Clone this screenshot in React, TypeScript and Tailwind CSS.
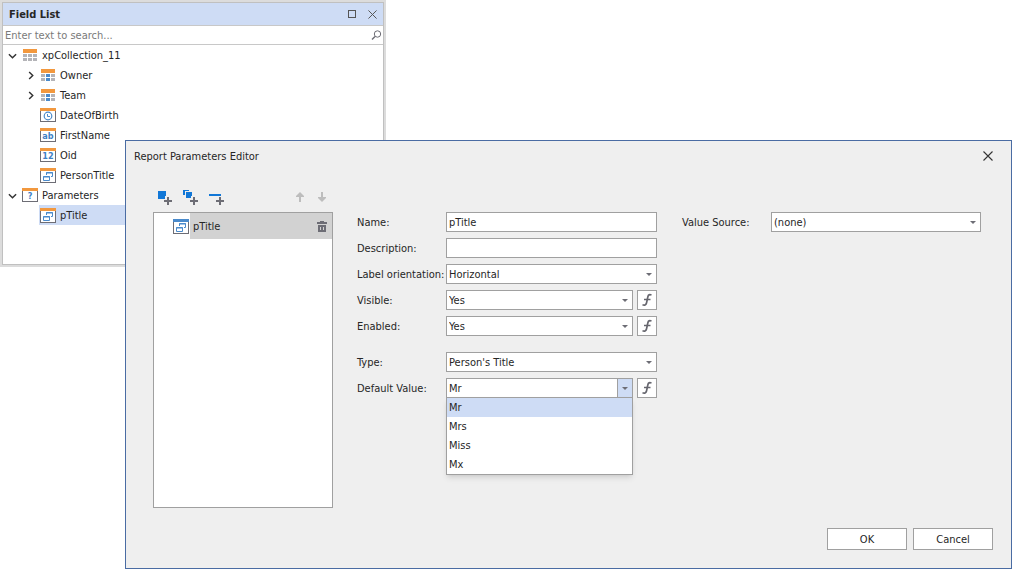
import { useId, type ReactNode } from 'react'

type IconKind = 'collection' | 'relation' | 'date' | 'text' | 'number' | 'question' | 'lookup'

interface TreeNode {
  label: string
  icon: IconKind
  level: 0 | 1
  state?: 'open' | 'closed'
  selected?: boolean
}

const nodes: TreeNode[] = [
  { label: 'xpCollection_11', icon: 'collection', level: 0, state: 'open' },
  { label: 'Owner', icon: 'relation', level: 1, state: 'closed' },
  { label: 'Team', icon: 'relation', level: 1, state: 'closed' },
  { label: 'DateOfBirth', icon: 'date', level: 1 },
  { label: 'FirstName', icon: 'text', level: 1 },
  { label: 'Oid', icon: 'number', level: 1 },
  { label: 'PersonTitle', icon: 'lookup', level: 1 },
  { label: 'Parameters', icon: 'question', level: 0, state: 'open' },
  { label: 'pTitle', icon: 'lookup', level: 1, selected: true },
]

const titles = ['Mr', 'Mrs', 'Miss', 'Mx']

function TableIcon({ linked }: { linked?: boolean }) {
  const mid = linked ? '#4a8acb' : '#b4b4b8'
  return (
    <svg width="16" height="16" viewBox="0 0 16 16" shapeRendering="crispEdges" aria-hidden="true">
      <rect x="1" y="2" width="14" height="4" fill="#f2983e" />
      {[7, 11].map((y) => (
        <g key={y}>
          <rect x="1" y={y} width="4" height="3" fill="#b4b4b8" />
          <rect x="6" y={y} width="4" height="3" fill={mid} />
          <rect x="11" y={y} width="4" height="3" fill="#b4b4b8" />
        </g>
      ))}
    </svg>
  )
}

function FrameIcon({ children }: { children: ReactNode }) {
  return (
    <svg width="16" height="16" viewBox="0 0 16 16" aria-hidden="true">
      <rect x="0.5" y="2.5" width="15" height="12" fill="#fff" stroke="#6d6d75" />
      <rect x="0" y="1" width="16" height="3" fill="#f2983e" />
      {children}
    </svg>
  )
}

function LookupIcon({ bar = '#f2983e' }: { bar?: string }) {
  return (
    <svg width="16" height="16" viewBox="0 0 16 16" aria-hidden="true">
      <rect x="0.5" y="2.5" width="15" height="13" fill="#fff" stroke="#6d6d75" />
      <rect x="0" y="1" width="16" height="3" fill={bar} />
      <g fill="none" stroke="#4a8acb">
        <path d="M6.5 8V5.5h6v4H11" />
        <path d="M6 6h7" />
        <path d="M3.5 9.5h6v4h-6z" />
        <path d="M3 10h7" />
      </g>
    </svg>
  )
}

function GlyphText({ children }: { children: string }) {
  return (
    <text x="8" y="12" textAnchor="middle" fill="#3f80c4" fontSize="9" fontWeight="700" fontFamily="DejaVu Sans Condensed, DejaVu Sans, sans-serif">
      {children}
    </text>
  )
}

function NodeIcon({ kind }: { kind: IconKind }) {
  switch (kind) {
    case 'collection':
      return <TableIcon />
    case 'relation':
      return <TableIcon linked />
    case 'date':
      return (
        <FrameIcon>
          <circle cx="8" cy="9" r="3.8" fill="none" stroke="#4a8acb" strokeWidth="1.2" />
          <path d="M7.5 7v2.500H10" fill="none" stroke="#4a8acb" />
        </FrameIcon>
      )
    case 'text':
      return <FrameIcon><GlyphText>ab</GlyphText></FrameIcon>
    case 'number':
      return <FrameIcon><GlyphText>12</GlyphText></FrameIcon>
    case 'question':
      return <FrameIcon><GlyphText>?</GlyphText></FrameIcon>
    case 'lookup':
      return <LookupIcon />
  }
}

function CloseIcon({ size }: { size: number }) {
  return (
    <svg width={size} height={size} viewBox="0 0 10 10" stroke="currentColor" strokeWidth="1.1" aria-hidden="true">
      <path d="M0.5 0.5l9 9M9.5 0.5l-9 9" />
    </svg>
  )
}

function Chevron({ state }: { state: 'open' | 'closed' }) {
  return (
    <svg width="9" height="9" viewBox="0 0 10 10" fill="none" stroke="#333" strokeWidth="1.6" aria-hidden="true">
      <path d={state === 'open' ? 'M1 3.5L5 7.5l4-4' : 'M3.5 1L7.5 5l-4 4'} />
    </svg>
  )
}

function TreeRow({ node }: { node: TreeNode }) {
  return (
    <li className={node.level === 1 ? 'flex h-5 pl-[19px]' : 'flex h-5 pl-px'}>
      <span className="flex w-[17px] shrink-0 items-center justify-center">
        {node.state && (
          <button type="button" aria-label={`Toggle ${node.label}`}>
            <Chevron state={node.state} />
          </button>
        )}
      </span>
      <span className={`flex flex-1 items-center gap-1 pl-px ${node.selected ? 'bg-[#cedcf5]' : ''}`}>
        <NodeIcon kind={node.icon} />
        {node.label}
      </span>
    </li>
  )
}

function FieldList() {
  return (
    <section className="w-[386px] border-2 border-[#dcdcdc] bg-white">
      <div className="border border-[#c0c0c0]">
        <header className="flex h-[23px] items-center border-b border-[#c8c8c8] bg-[#cedcf5] pr-1.5 pl-1.5">
          <h2 className="flex-1 font-bold">Field List</h2>
          <div className="flex items-center gap-3 text-[#555]">
            <button type="button" aria-label="Maximize" className="size-2 border border-[#555]" />
            <button type="button" aria-label="Close field list">
              <CloseIcon size={9} />
            </button>
          </div>
        </header>
        <div className="flex h-[19px] items-center border-b border-[#c8c8c8] pr-px pl-0.5">
          <input
            type="text"
            aria-label="Search fields"
            placeholder="Enter text to search..."
            className="min-w-0 flex-1 outline-none placeholder:text-[#7a7a7a]"
          />
          <svg width="11" height="11" viewBox="0 0 11 11" fill="none" stroke="#6d6d75" aria-hidden="true">
            <circle cx="6.5" cy="4" r="3.2" />
            <path d="M4 6.5L1 9.5" strokeWidth="1.5" />
          </svg>
        </div>
        <ul className="pb-[39px]">
          {nodes.map((node) => (
            <TreeRow key={node.label} node={node} />
          ))}
        </ul>
      </div>
    </section>
  )
}

function Field({ label, children }: { label: string; children: (id: string) => ReactNode }) {
  const id = useId()
  return (
    <div className="flex h-5 items-center">
      <label htmlFor={id} className="w-[89px] shrink-0 whitespace-nowrap">
        {label}
      </label>
      {children(id)}
    </div>
  )
}

function TextBox({ id, value }: { id: string; value?: string }) {
  return (
    <input id={id} type="text" defaultValue={value} className="h-5 min-w-0 flex-1 border border-[#a0a0a0] bg-white px-0.5 outline-none" />
  )
}

interface DropDownProps {
  id: string
  options: string[]
  open?: boolean
}

function DropDown({ id, options, open }: DropDownProps) {
  return (
    <div className="relative h-5 min-w-0 flex-1">
      <select id={id} className="h-5 w-full appearance-none border border-[#a0a0a0] bg-white px-0.5 outline-none">
        {options.map((option) => (
          <option key={option}>{option}</option>
        ))}
      </select>
      <span
        className={`pointer-events-none absolute inset-y-0 right-0 flex w-4 items-center justify-center ${
          open ? 'border border-[#a0a0a0] bg-[#cedcf5]' : ''
        }`}
      >
        <svg width="6" height="3" viewBox="0 0 6 3" fill="#6d6d75" aria-hidden="true">
          <path d="M0 0h6L3 3z" />
        </svg>
      </span>
      {open && (
        <ul role="listbox" aria-label="Default values" className="absolute inset-x-0 top-[19px] z-10 border border-[#a0a0a0] bg-white shadow-md">
          {options.map((option, i) => (
            <li key={option} role="option" aria-selected={i === 0} className="flex h-[19px] items-center px-0.5 aria-selected:bg-[#cedcf5]">
              {option}
            </li>
          ))}
        </ul>
      )}
    </div>
  )
}

function ExpressionButton({ label }: { label: string }) {
  return (
    <button type="button" aria-label={label} className="ml-1 flex size-5 shrink-0 items-center justify-center border border-[#a0a0a0] bg-white">
      <svg width="12" height="14" viewBox="0 0 12 14" fill="none" stroke="#66666e" strokeWidth="1.7" aria-hidden="true">
        <path d="M10.5 2C8.5 1.3 7.3 1.8 6.9 3.6L5.5 10C5.1 12 3.500 12.500 1.500 11.800" />
        <path d="M3 6.5h6.500" strokeWidth="1.5" />
      </svg>
    </button>
  )
}

function Toolbar() {
  return (
    <div className="flex h-5 items-center pl-1">
      <div className="flex flex-1 gap-2.5">
        <button type="button" aria-label="Add parameter">
          <svg width="16" height="16" viewBox="0 0 16 16" shapeRendering="crispEdges" aria-hidden="true">
            <path d="M1 2h8v5H8v3H1z" fill="#1177d7" />
            <path d="M10 8h2v3h3v2h-3v3h-2v-3H7v-2h3z" fill="#6d6d75" />
          </svg>
        </button>
        <button type="button" aria-label="Add group">
          <svg width="16" height="16" viewBox="0 0 16 16" shapeRendering="crispEdges" aria-hidden="true">
            <path d="M0 1h6v1H2v4H0zM3 3h6v4H8v2H3z" fill="#1177d7" />
            <path d="M10 8h2v3h3v2h-3v3h-2v-3H7v-2h3z" fill="#6d6d75" />
          </svg>
        </button>
        <button type="button" aria-label="Add separator">
          <svg width="16" height="16" viewBox="0 0 16 16" shapeRendering="crispEdges" aria-hidden="true">
            <path d="M0 5h12v2H0z" fill="#1177d7" />
            <path d="M10 8h2v3h3v2h-3v3h-2v-3H7v-2h3z" fill="#6d6d75" />
          </svg>
        </button>
      </div>
      <div className="flex gap-3.5 pr-[7px] text-[#bdbdbd]">
        <button type="button" aria-label="Move up" disabled>
          <svg width="8" height="10" viewBox="0 0 8 10" fill="currentColor" aria-hidden="true">
            <path d="M4 0l4 4v1H5v5H3V5H0V4z" />
          </svg>
        </button>
        <button type="button" aria-label="Move down" disabled>
          <svg width="8" height="10" viewBox="0 0 8 10" fill="currentColor" aria-hidden="true">
            <path d="M4 10l4-4V5H5V0H3v5H0v1z" />
          </svg>
        </button>
      </div>
    </div>
  )
}

function ParameterList() {
  return (
    <div className="flex w-[180px] shrink-0 flex-col">
      <Toolbar />
      <ul className="mt-[5px] flex-1 border border-[#a0a0a0] bg-white">
        <li className="flex h-[26px]">
          <span className="flex w-9 items-center justify-end pr-px">
            <LookupIcon bar="#4a8acb" />
          </span>
          <span className="flex flex-1 items-center justify-between bg-[#d2d2d2] pr-[5px] pl-[3px]">
            pTitle
            <button type="button" aria-label="Delete pTitle">
              <svg width="10" height="11" viewBox="0 0 10 11" fill="#6d6d75" shapeRendering="crispEdges" aria-hidden="true">
                <path d="M3 0h4v1h3v2H0V1h3zM1 4h8v7H1zM3 6v3h1V6zM6 6v3h1V6z" fillRule="evenodd" />
              </svg>
            </button>
          </span>
        </li>
      </ul>
    </div>
  )
}

function ParametersEditor() {
  return (
    <section role="dialog" aria-label="Report Parameters Editor" className="absolute top-[140px] right-0 bottom-0 left-[125px] flex flex-col border border-[#4a6ca3] bg-[#efefef]">
      <header className="flex h-[30px] shrink-0 items-center justify-between pr-[18px] pl-2">
        <h1>Report Parameters Editor</h1>
        <button type="button" aria-label="Close dialog" className="text-[#333]">
          <CloseIcon size={10} />
        </button>
      </header>

      <div className="flex flex-1 px-[27px] pt-4">
        <ParameterList />

        <div className="mt-[25px] ml-6 grid w-[300px] shrink-0 content-start gap-y-1.5">
          <Field label="Name:">{(id) => <TextBox id={id} value="pTitle" />}</Field>
          <Field label="Description:">{(id) => <TextBox id={id} />}</Field>
          <Field label="Label orientation:">{(id) => <DropDown id={id} options={['Horizontal', 'Vertical']} />}</Field>
          <Field label="Visible:">
            {(id) => (
              <>
                <DropDown id={id} options={['Yes', 'No']} />
                <ExpressionButton label="Visible expression" />
              </>
            )}
          </Field>
          <Field label="Enabled:">
            {(id) => (
              <>
                <DropDown id={id} options={['Yes', 'No']} />
                <ExpressionButton label="Enabled expression" />
              </>
            )}
          </Field>
          <div className="mt-2.5">
            <Field label="Type:">{(id) => <DropDown id={id} options={["Person's Title"]} />}</Field>
          </div>
          <Field label="Default Value:">
            {(id) => (
              <>
                <DropDown id={id} options={titles} open />
                <ExpressionButton label="Default value expression" />
              </>
            )}
          </Field>
        </div>

        <div className="mt-[25px] ml-[25px] w-[299px]">
          <Field label="Value Source:">{(id) => <DropDown id={id} options={['(none)']} />}</Field>
        </div>
      </div>

      <footer className="flex justify-end gap-1.5 px-[18px] pt-5 pb-[18px]">
        <button type="button" className="h-[22px] w-20 border border-[#a0a0a0] bg-white">OK</button>
        <button type="button" className="h-[22px] w-20 border border-[#a0a0a0] bg-white">Cancel</button>
      </footer>
    </section>
  )
}

export default function App() {
  return (
    <main className="relative min-h-screen bg-white font-['DejaVu_Sans_Condensed','DejaVu_Sans',sans-serif] text-[11px] leading-[17px] text-[#262626]">
      <FieldList />
      <ParametersEditor />
    </main>
  )
}
